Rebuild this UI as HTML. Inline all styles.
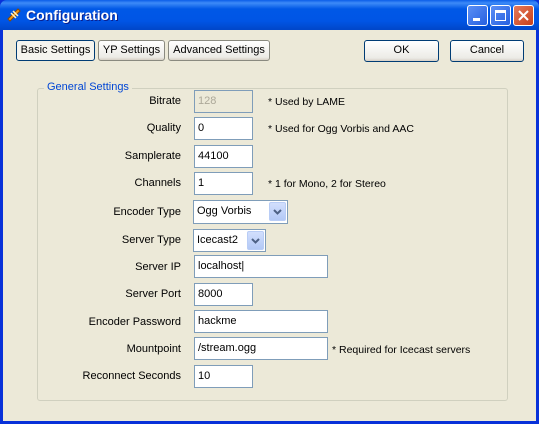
<!DOCTYPE html>
<html><head><meta charset="utf-8"><style>
*{box-sizing:border-box;margin:0;padding:0}
body{width:539px;height:424px;overflow:hidden;background:#0831d9;font-family:"Liberation Sans",sans-serif;font-size:11px;color:#000;position:relative}
.title{position:absolute;left:0;top:0;width:539px;height:30px;border-radius:7px 7px 0 0;background:linear-gradient(#0a5ee8 0%,#3d8bf7 10%,#0058e6 30%,#0055e5 70%,#0046c8 100%)}
.title span{position:absolute;left:26px;top:7px;color:#fff;font-weight:bold;font-size:14px;text-shadow:1px 1px #0a1e8c}
.client{position:absolute;left:3px;top:30px;width:533px;height:391px;background:#ece9d8}
.tb{position:absolute;top:5px;width:21px;height:21px;border:1px solid #fff;border-radius:3px;background:linear-gradient(135deg,#5b8ff5,#2660e0)}
.abs{position:absolute}
.btn{position:absolute;border:1px solid #003c74;border-radius:3px;background:linear-gradient(#fff,#ecebe6 85%,#d6d0c5);text-align:center;line-height:19px;font-size:11px}
.lbl{position:absolute;width:150px;left:31px;text-align:right;font-size:11px}
.in{position:absolute;left:194px;background:#fff;border:1px solid #7f9db9;height:23px;padding:4px 0 0 3px;font-size:11px}
.note{position:absolute;left:268px;font-size:10.5px}
.cb{position:absolute;left:193px;background:#fff;border:1px solid #7f9db9;height:23px;padding:4px 0 0 3px}
.dd{position:absolute;right:1px;top:1px;width:17px;height:19px;border-radius:2px;background:linear-gradient(#d2dffd,#b3c9f6);border:1px solid #b9cdf6}
</style></head><body>
<div class="title"><span>Configuration</span>
<svg class="abs" style="left:6px;top:7px" width="16" height="16" viewBox="0 0 16 16"><path d="M2 12 L12 2 L14 4 L4 14Z" fill="#f29a1a" stroke="#8a4a00" stroke-width="1"/><path d="M5 6 L10 11 M7 4 L12 9" stroke="#fff4c0" stroke-width="1.5"/></svg>
<div class="tb" style="left:467px"><div class="abs" style="left:5px;top:12px;width:7px;height:3px;background:#fff"></div></div>
<div class="tb" style="left:490px"><div class="abs" style="left:4px;top:4px;width:11px;height:11px;border:1px solid #fff;border-top-width:3px"></div></div>
<div class="tb" style="left:513px;background:linear-gradient(135deg,#e57a5b,#c8401a)"><svg class="abs" style="left:4px;top:4px" width="11" height="11"><path d="M1 1L10 10M10 1L1 10" stroke="#fff" stroke-width="2"/></svg></div>
</div>
<div class="client"></div>
<div class="btn" style="left:16px;top:40px;width:79px;height:21px;background:#f5f4ee">Basic Settings</div>
<div class="btn" style="left:98px;top:40px;width:67px;height:21px;border-color:#8a8a80">YP Settings</div>
<div class="btn" style="left:168px;top:40px;width:102px;height:21px;border-color:#8a8a80">Advanced Settings</div>
<div class="btn" style="left:364px;top:40px;width:75px;height:22px">OK</div>
<div class="btn" style="left:450px;top:40px;width:74px;height:22px">Cancel</div>
<div class="abs" style="left:37px;top:88px;width:471px;height:313px;border:1px solid #d0d0bf;border-radius:3px"></div>
<div class="abs" style="left:44px;top:81px;background:#ece9d8;color:#0046d5;padding:0 3px;font-size:11px">General Settings</div>

<div class="lbl" style="top:95px">Bitrate</div><div class="in" style="top:90px;width:59px;color:#aca899;background:#ece9d8">128</div><div class="note" style="top:96px">* Used by LAME</div>
<div class="lbl" style="top:122px">Quality</div><div class="in" style="top:117px;width:59px">0</div><div class="note" style="top:123px">* Used for Ogg Vorbis and AAC</div>
<div class="lbl" style="top:150px">Samplerate</div><div class="in" style="top:145px;width:59px">44100</div>
<div class="lbl" style="top:177px">Channels</div><div class="in" style="top:172px;width:59px">1</div><div class="note" style="top:178px">* 1 for Mono, 2 for Stereo</div>
<div class="lbl" style="top:206px">Encoder Type</div><div class="cb" style="top:200px;width:95px;height:24px">Ogg Vorbis<div class="dd"><svg class="abs" style="left:3px;top:6px" width="9" height="6"><path d="M1 1L4.5 4.5L8 1" stroke="#4d6185" stroke-width="2" fill="none"/></svg></div></div>
<div class="lbl" style="top:234px">Server Type</div><div class="cb" style="top:229px;width:73px">Icecast2<div class="dd"><svg class="abs" style="left:3px;top:6px" width="9" height="6"><path d="M1 1L4.5 4.5L8 1" stroke="#4d6185" stroke-width="2" fill="none"/></svg></div></div>
<div class="lbl" style="top:261px">Server IP</div><div class="in" style="top:255px;width:134px">localhost|</div>
<div class="lbl" style="top:288px">Server Port</div><div class="in" style="top:283px;width:59px">8000</div>
<div class="lbl" style="top:316px">Encoder Password</div><div class="in" style="top:310px;width:134px">hackme</div>
<div class="lbl" style="top:343px">Mountpoint</div><div class="in" style="top:337px;width:134px">/stream.ogg</div><div class="note" style="left:332px;top:344px">* Required for Icecast servers</div>
<div class="lbl" style="top:370px">Reconnect Seconds</div><div class="in" style="top:365px;width:59px">10</div>
</body></html>
